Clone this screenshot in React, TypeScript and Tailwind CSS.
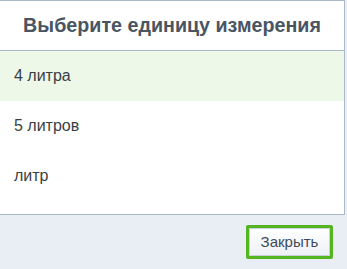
import React from "react";

export default function App() {
  const items = ["4 литра", "5 литров", "литр"];
  return (
    <div
      className="w-[347px] h-[269px] bg-[#e9edf4] flex flex-col overflow-hidden"
      style={{ fontFamily: '"Liberation Sans", Arial, sans-serif' }}
    >
      <div className="w-[345px] h-[215px] bg-white border-t border-r border-b border-[#a9b9c9] flex flex-col">
        <div className="h-[50px] border-b border-[#a9b9c9] flex items-center justify-center">
          <span className="text-[19.7px] font-bold text-[#4a5561] leading-none">
            Выберите единицу измерения
          </span>
        </div>
        {items.map((t, i) => (
          <div
            key={t}
            className={
              i === 0
                ? "h-[50px] flex items-center pl-[14px] bg-[#edf8e8] text-[16px] text-[#3a3f45]"
                : "h-[50px] flex items-center pl-[14px] text-[16px] text-[#3a3f45]"
            }
          >
            {t}
          </div>
        ))}
      </div>
      <div className="flex justify-end pt-[10px] pr-[14px]">
        <div className="border-[3px] border-[#55b521] rounded-[2px]">
          <button className="w-[81px] h-[28px] flex items-center justify-center bg-gradient-to-b from-white to-[#eef1f5] text-[15px] text-[#3c4a5a] border border-[#c9d2dc]">
            Закрыть
          </button>
        </div>
      </div>
    </div>
  );
}
